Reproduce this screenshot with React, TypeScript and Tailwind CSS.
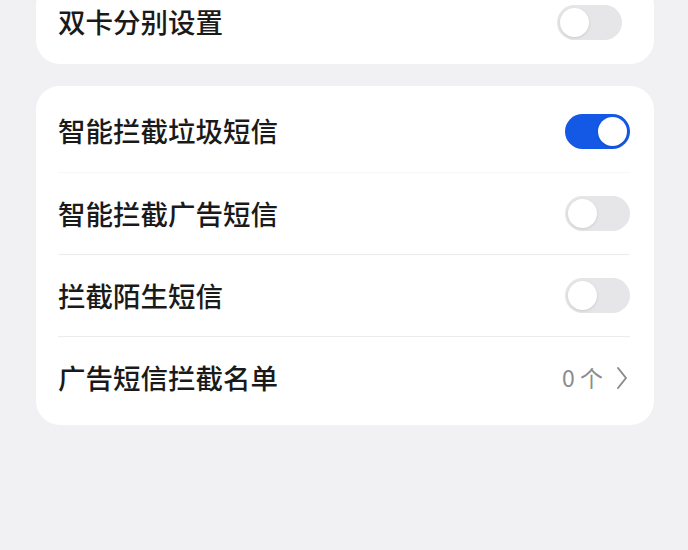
import React, { useState } from 'react';

const FONT = "font-['Noto_Sans_CJK_SC','Noto_Sans',sans-serif]";

interface ToggleProps {
  on: boolean;
  onChange: () => void;
}

const Toggle: React.FC<ToggleProps> = ({ on, onChange }) => (
  <button
    onClick={onChange}
    className={`relative h-[35px] w-[65px] shrink-0 rounded-full transition-colors ${
      on ? 'bg-[#1458e6]' : 'bg-[#e6e6e8]'
    }`}
  >
    <span
      className={`absolute top-[3px] h-[29px] w-[29px] rounded-full bg-white shadow-[0_1px_3px_rgba(0,0,0,0.12)] transition-all ${
        on ? 'left-[33px]' : 'left-[3px]'
      }`}
    />
  </button>
);

type Row =
  | { id: string; label: string; kind: 'toggle' }
  | { id: string; label: string; kind: 'link'; value: string };

const rows: Row[] = [
  { id: 'spam', label: '智能拦截垃圾短信', kind: 'toggle' },
  { id: 'ads', label: '智能拦截广告短信', kind: 'toggle' },
  { id: 'stranger', label: '拦截陌生短信', kind: 'toggle' },
  { id: 'adlist', label: '广告短信拦截名单', kind: 'link', value: '0 个' },
];

const App: React.FC = () => {
  const [dualSim, setDualSim] = useState(false);
  const [state, setState] = useState<Record<string, boolean>>({
    spam: true,
    ads: false,
    stranger: false,
  });

  const flip = (id: string) => setState((s) => ({ ...s, [id]: !s[id] }));

  return (
    <div className={`h-[550px] w-[688px] overflow-hidden bg-[#f1f1f3] ${FONT}`}>
      <div className="ml-[36px] w-[618px]">
        {/* dual sim card, scrolled partly off the top */}
        <div className="-mt-[18px] rounded-[24px] bg-white pb-[2px] pl-[22px] pr-[32px]">
          <div className="flex h-[80px] items-center justify-between">
            <span className="text-[27.5px] font-medium leading-none text-[#1a1a1a]">双卡分别设置</span>
            <Toggle on={dualSim} onChange={() => setDualSim(!dualSim)} />
          </div>
        </div>

        {/* interception settings */}
        <div className="mt-[22px] rounded-[24px] bg-white pb-[7px] pl-[22px] pr-[24px] pt-[4px]">
          {rows.map((row, i) => (
            <div
              key={row.id}
              className={`flex h-[82px] items-center justify-between ${
                i > 0 ? (i === 1 ? 'border-t border-[#f7f7f7]' : 'border-t border-[#ececee]') : ''
              }`}
            >
              <span className="text-[27.5px] font-medium leading-none text-[#1a1a1a]">{row.label}</span>
              {row.kind === 'toggle' ? (
                <Toggle on={state[row.id]} onChange={() => flip(row.id)} />
              ) : (
                <div className="mr-[2px] flex items-center gap-[13px] text-[#8c8c8c]">
                  <span className="text-[23px] leading-none">{row.value}</span>
                  <svg width="12" height="24" viewBox="0 0 12 24" fill="none">
                    <path d="M2 2l8 10-8 10" stroke="#8c8c8c" strokeWidth="2" strokeLinecap="round" strokeLinejoin="round" />
                  </svg>
                </div>
              )}
            </div>
          ))}
        </div>
      </div>
    </div>
  );
};

export default App;
